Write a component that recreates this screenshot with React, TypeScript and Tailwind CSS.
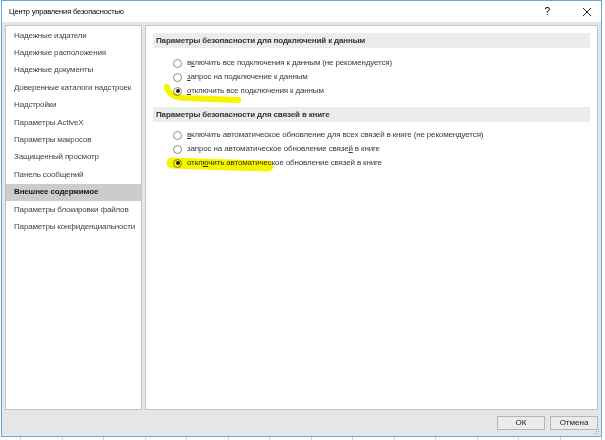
const font = "font-['Liberation_Sans',Arial,sans-serif]";

const navItems = [
  "Надежные издатели",
  "Надежные расположения",
  "Надежные документы",
  "Доверенные каталоги надстроек",
  "Надстройки",
  "Параметры ActiveX",
  "Параметры макросов",
  "Защищенный просмотр",
  "Панель сообщений",
  "Внешнее содержимое",
  "Параметры блокировки файлов",
  "Параметры конфиденциальности",
];

function Radio({ checked, children }: { checked?: boolean; children: React.ReactNode }) {
  return (
    <div className="flex h-[14px] items-center">
      <span className="flex h-[9px] w-[9px] shrink-0 items-center justify-center rounded-full border border-[#8a8a8a] bg-white">
        {checked && <span className="h-[4px] w-[4px] rounded-full bg-[#222]" />}
      </span>
      <span className="ml-[5px] whitespace-nowrap text-[8px] leading-none tracking-[-0.15px] text-[#3a3a3a]">{children}</span>
    </div>
  );
}

function SectionHeader({ children }: { children: React.ReactNode }) {
  return (
    <div className="flex h-[15px] items-center whitespace-nowrap bg-[#ececec] pl-[3px] text-[8px] font-bold leading-none tracking-[-0.15px] text-[#333]">
      {children}
    </div>
  );
}

export default function App() {
  return (
    <div className={`relative h-[440px] w-[605px] overflow-hidden bg-white ${font}`}>
      <div className="ml-[1px] flex h-[437px] w-[601px] flex-col border border-[#6aa5dc] bg-[#e6e6e6]">
        {/* title bar */}
        <div className="flex h-[21px] shrink-0 items-center bg-white pl-[7px] text-[7.5px] tracking-[-0.15px] text-black">
          <span>Центр управления безопасностью</span>
          <span className="ml-auto mr-[32px] text-[10px]">?</span>
          <svg width="10" height="10" viewBox="0 0 10 10" className="mr-[9px]">
            <path d="M1 1 L9 9 M9 1 L1 9" stroke="#222" strokeWidth="1" />
          </svg>
        </div>

        {/* body */}
        <div className="flex h-[388px] shrink-0 gap-[3px] pl-[3px] pr-[3px] pt-[3px]">
          <div className="w-[137px] shrink-0 border border-[#c4c4c4] bg-white pt-[1px]">
            {navItems.map((item) => (
              <div
                key={item}
                className={`flex h-[17.4px] items-center whitespace-nowrap pl-[8px] text-[8px] leading-none tracking-[-0.15px] ${
                  item === "Внешнее содержимое" ? "bg-[#cccccc] font-bold text-[#1a1a1a]" : "text-[#444]"
                }`}
              >
                {item}
              </div>
            ))}
          </div>

          <div className="relative flex-1 border border-[#c4c4c4] bg-white px-[7px] pt-[7px]">
            <SectionHeader>Параметры безопасности для подключений к данным</SectionHeader>
            <div className="pl-[20px] pt-[8px]">
              <Radio>
                в<u>к</u>лючить все подключения к данным (не рекомендуется)
              </Radio>
              <Radio>
                <u>з</u>апрос на подключение к данным
              </Radio>
              <Radio checked>
                <u>о</u>тключить все подключения к данным
              </Radio>
            </div>

            <div className="mt-[9px]">
              <SectionHeader>Параметры безопасности для связей в книге</SectionHeader>
            </div>
            <div className="pl-[20px] pt-[6px]">
              <Radio>
                <u>в</u>ключить автоматическое обновление для всех связей в книге (не рекомендуется)
              </Radio>
              <Radio>
                запрос на автоматическое обновление связе<u>й</u> в книге
              </Radio>
              <Radio checked>
                откл<u>ю</u>чить автоматическое обновление связей в книге
              </Radio>
            </div>
          </div>
        </div>

        {/* footer */}
        <div className="relative flex flex-1 items-center justify-end gap-[5px] pr-[3px]">
          <button className="h-[14px] w-[48px] border border-[#b5b5b5] bg-[#ebebeb] text-[8px] leading-none text-[#222]">
            ОК
          </button>
          <button className="h-[14px] w-[48px] border border-[#b5b5b5] bg-[#ebebeb] text-[8px] leading-none text-[#222]">
            Отмена
          </button>
          <svg width="6" height="6" viewBox="0 0 6 6" className="absolute bottom-[1px] right-[1px]">
            <rect x="4" y="0" width="1" height="1" fill="#aaa" />
            <rect x="2" y="2" width="1" height="1" fill="#aaa" />
            <rect x="4" y="2" width="1" height="1" fill="#aaa" />
            <rect x="0" y="4" width="1" height="1" fill="#aaa" />
            <rect x="2" y="4" width="1" height="1" fill="#aaa" />
            <rect x="4" y="4" width="1" height="1" fill="#aaa" />
          </svg>
        </div>
      </div>

      {/* spreadsheet behind the dialog */}
      <div className="flex h-[3px]">
        {Array.from({ length: 15 }).map((_, i) => (
          <div key={i} className={`h-full shrink-0 border-r border-[#d4d4d4] ${i === 0 ? "w-[21px]" : "w-[41.5px]"}`} />
        ))}
      </div>

      {/* marker strokes drawn over the screenshot */}
      <svg className="pointer-events-none absolute left-0 top-0 mix-blend-multiply" width="605" height="440">
        <path d="M167 87 Q169 97 184 98 L238 100" stroke="#f5f500" strokeWidth="6" fill="none" strokeLinecap="round" />
        <path d="M172 163 L200 164 L268 166" stroke="#f5f500" strokeWidth="11" fill="none" strokeLinecap="round" />
      </svg>
    </div>
  );
}
